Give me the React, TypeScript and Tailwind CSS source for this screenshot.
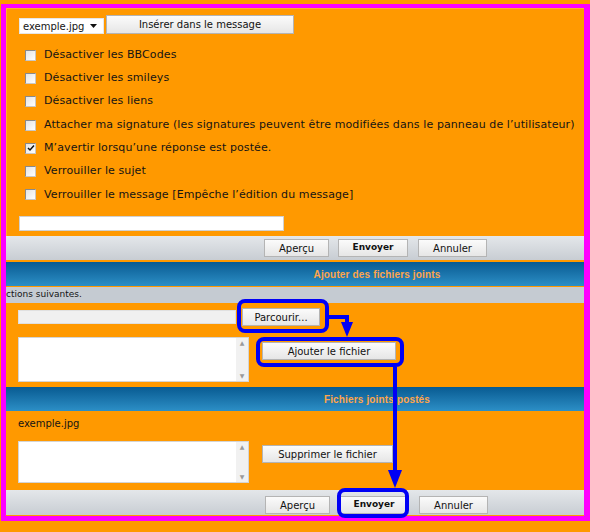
import React from "react";

const options = [
  { label: "Désactiver les BBCodes", checked: false },
  { label: "Désactiver les smileys", checked: false },
  { label: "Désactiver les liens", checked: false },
  {
    label:
      "Attacher ma signature (les signatures peuvent être modifiées dans le panneau de l’utilisateur)",
    checked: false,
  },
  { label: "M’avertir lorsqu’une réponse est postée.", checked: true },
  { label: "Verrouiller le sujet", checked: false },
  { label: "Verrouiller le message [Empêche l’édition du message]", checked: false },
];

function Btn({ children, className = "", bold = false }: { children: React.ReactNode; className?: string; bold?: boolean }) {
  return (
    <div
      className={`flex items-center justify-center border border-[#b4b4b4] bg-gradient-to-b from-[#fbfbfb] to-[#e6e6e6] text-[#111] ${
        bold ? "font-bold text-[9px]" : "text-[10px]"
      } ${className}`}
    >
      {children}
    </div>
  );
}

function Checkbox({ checked }: { checked: boolean }) {
  return (
    <div className="w-[11px] h-[11px] border border-[#8a8a8a] border-r-[#c8c8c8] border-b-[#c8c8c8] bg-gradient-to-br from-[#e4e4e4] to-[#ffffff] flex items-center justify-center">
      {checked && (
        <svg width="8" height="8" viewBox="0 0 8 8">
          <path d="M1 4 L3 6 L7 1.5" stroke="#111" strokeWidth="1.5" fill="none" />
        </svg>
      )}
    </div>
  );
}

function TextArea({ className = "" }: { className?: string }) {
  return (
    <div className={`flex bg-white border border-[#d4d4d4] ${className}`}>
      <div className="flex-1" />
      <div className="w-[12px] bg-[#f1f1f1] flex flex-col justify-between items-center py-[1px] text-[6px] text-[#9a9a9a] leading-[8px]">
        <span>▲</span>
        <span>▼</span>
      </div>
    </div>
  );
}

function Header({ title }: { title: string }) {
  return (
    <div className="h-[24px] bg-gradient-to-b from-[#075b92] to-[#2c8fc6] flex items-center justify-center pl-[164px]">
      <span className="font-['Liberation_Sans',sans-serif] font-bold text-[10px] tracking-[0.15px] text-[#ffa54a]">
        {title}
      </span>
    </div>
  );
}

function ButtonBar({ className = "" }: { className?: string }) {
  return (
    <div className={`bg-gradient-to-b from-[#e4e7ea] to-[#c8cdd3] flex ${className}`}>
      <Btn className="w-[65px] h-[18px]">Aperçu</Btn>
      <Btn bold className="w-[70px] h-[18px] ml-[9px]">Envoyer</Btn>
      <Btn className="w-[69px] h-[18px] ml-[10px]">Annuler</Btn>
    </div>
  );
}

export default function App() {
  return (
    <div className="relative w-[590px] h-[532px] bg-[#ff9900] pt-[4px] pl-[1px] pb-[11px] font-['DejaVu_Sans',sans-serif] text-[10px] text-[#141414]">
      <div className="h-full border-[#ff00ff] border-t-[4px] border-l-[5px] border-r-[6px] border-b-[5px] flex flex-col">
        {/* options */}
        <div className="h-[228px] pl-[12px] border-t border-l border-[#ffad33]">
          <div className="flex items-end h-[25px] pt-[5px]">
            <div className="w-[85px] h-[16px] bg-white border border-[#e6e6e6] flex items-center justify-between pl-[3px] pr-[6px]">
              <span>exemple.jpg</span>
              <svg width="7" height="4" viewBox="0 0 7 4">
                <path d="M0 0 L7 0 L3.5 4 Z" fill="#111" />
              </svg>
            </div>
            <Btn className="w-[188px] h-[19px] ml-[2px] border-[#85859a]">Insérer dans le message</Btn>
          </div>
          <div className="mt-[9.5px]">
            {options.map((o) => (
              <div key={o.label} className="h-[23.3px] flex items-center pl-[6px] gap-[8px]">
                <Checkbox checked={o.checked} />
                <span className="whitespace-nowrap text-[11px] tracking-[0.1px]">{o.label}</span>
              </div>
            ))}
          </div>
          <div className="mt-[9px] w-[265px] h-[15px] bg-white border border-[#d0d0d0]" />
        </div>

        <ButtonBar className="h-[24px] items-center pl-[258px]" />
        <div className="h-[2px] bg-[#ff9900]" />
        <Header title="Ajouter des fichiers joints" />
        <div className="h-[1px] bg-[#ff9900]" />
        <div className="h-[16px] bg-[#c5cbd2] flex items-center text-[9px] whitespace-nowrap">ctions suivantes.</div>

        {/* add attachment */}
        <div className="h-[84px] pl-[12px] pt-[5px]">
          <div className="flex items-center h-[18px]">
            <div className="w-[218px] h-[14px] bg-[#f0f0f0] border border-[#e0e0e0]" />
            <Btn className="w-[78px] h-[18px] ml-[6px]">Parcourir...</Btn>
          </div>
          <div className="flex items-start mt-[11px]">
            <TextArea className="w-[231px] h-[45px]" />
            <Btn className="w-[134px] h-[18px] ml-[13px] mt-[5px]">Ajouter le fichier</Btn>
          </div>
        </div>

        <Header title="Fichiers joints postés" />
        <div className="h-[1px] bg-[#ff9900]" />

        {/* posted attachments */}
        <div className="h-[78px] pl-[12px] pt-[6px]">
          <div className="leading-[12px]">exemple.jpg</div>
          <div className="flex items-start mt-[11px]">
            <TextArea className="w-[231px] h-[42px]" />
            <Btn className="w-[131px] h-[18px] ml-[13px] mt-[4px]">Supprimer le fichier</Btn>
          </div>
        </div>

        <ButtonBar className="h-[25px] items-end pb-[1px] pl-[259px]" />
      </div>

      {/* annotations */}
      <svg className="absolute inset-0 pointer-events-none" width="590" height="532" viewBox="0 0 590 532">
        <g stroke="#0000f5" strokeWidth="4" fill="none">
          <rect x="239" y="301" width="88" height="30" rx="6" />
          <rect x="258" y="339" width="144" height="26" rx="6" />
          <rect x="339" y="490" width="68" height="26" rx="6" />
          <path d="M329 317 H347 V326" />
          <path d="M395 367 V476" />
        </g>
        <g fill="#0000f5">
          <polygon points="341,322 353,322 347,337" />
          <polygon points="388,470 402,470 395,488" />
        </g>
      </svg>
    </div>
  );
}
